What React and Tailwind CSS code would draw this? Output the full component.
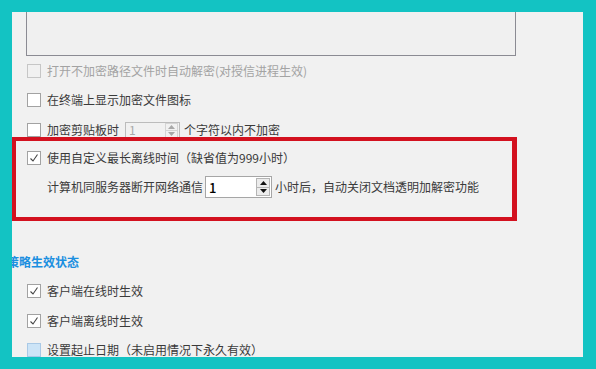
import React from 'react';

const font = { fontFamily: '"Noto Sans CJK SC", "Noto Sans", sans-serif' };

const Check = ({ checked, disabled, tint }) => (
  <span
    className={
      'w-[14px] h-[14px] shrink-0 border flex items-center justify-center ' +
      (disabled
        ? 'border-[#c6c6c6] bg-transparent'
        : tint
        ? 'border-[#a9c9e6] bg-[#cce4f7]'
        : 'border-[#a2a2a2] bg-white')
    }
  >
    {checked && (
      <svg width="12" height="12" viewBox="0 0 12 12">
        <polyline points="2.5,6.5 5,9 9.5,2.5" fill="none" stroke="#444" strokeWidth="1.1" />
      </svg>
    )}
  </span>
);

const Row = ({ className = '', children }) => (
  <div className={'flex items-center h-[22px] pl-[15px] gap-[6px] ' + className}>{children}</div>
);

const Spin = ({ disabled }) => (
  <div
    className={
      'flex items-center justify-between border ' +
      (disabled
        ? 'w-[55px] h-[17px] border-[#bcbcbc] bg-transparent'
        : 'w-[67px] h-[22px] border-[#a6a6a6] bg-white')
    }
  >
    <span className={'pl-[3px] leading-none ' + (disabled ? 'text-[12px] text-[#a8a8a8]' : 'text-[13px] text-black font-medium')}>1</span>
    <div className={'flex flex-col mr-[1px] ' + (disabled ? 'w-[13px] h-[15px]' : 'w-[14px] h-[18px]')}>
      <span className={'flex-1 flex items-center justify-center border ' + (disabled ? 'border-[#d4d4d4]' : 'border-[#b5b5b5] bg-[#ececec]')}>
        <svg width="7" height="4" viewBox="0 0 7 4"><polygon points="0,4 3.5,0 7,4" fill={disabled ? '#a8a8a8' : '#111'} /></svg>
      </span>
      <span className={'flex-1 flex items-center justify-center border border-t-0 ' + (disabled ? 'border-[#d4d4d4]' : 'border-[#b5b5b5] bg-[#ececec]')}>
        <svg width="7" height="4" viewBox="0 0 7 4"><polygon points="0,0 7,0 3.5,4" fill={disabled ? '#a8a8a8' : '#111'} /></svg>
      </span>
    </div>
  </div>
);

export default function App() {
  return (
    <div className="w-[596px] h-[369px] bg-[#13c3c3] pt-[12px] pl-[12px] pr-[13px] pb-[12px]" style={font}>
      <div className="relative w-full h-full bg-[#f1f1f1] overflow-hidden text-[12px] text-[#3a3a3a]">
        <div className="ml-[14px] mt-[-10px] w-[490px] h-[54px] border border-[#8b8b93] bg-[#f0f0f0]" />

        <Row className="mt-[4px] text-[#a3a3a3]">
          <Check disabled />
          <span>打开不加密路径文件时自动解密(对授信进程生效)</span>
        </Row>
        <Row className="mt-[7px]">
          <Check />
          <span>在终端上显示加密文件图标</span>
        </Row>
        <Row className="mt-[8px]">
          <Check />
          <span>加密剪贴板时</span>
          <Spin disabled />
          <span className="-ml-[2px]">个字符以内不加密</span>
        </Row>
        <Row className="mt-[6px]">
          <Check checked />
          <span>使用自定义最长离线时间（缺省值为999小时）</span>
        </Row>
        <div className="flex items-center h-[22px] pl-[35px] mt-[7px] gap-[2px]">
          <span>计算机同服务器断开网络通信</span>
          <Spin />
          <span className="ml-[1px]">小时后，自动关闭文档透明加解密功能</span>
        </div>

        <div className="h-[22px] mt-[53px] flex items-center -ml-[5px] font-bold text-[#1b8fe0]">策略生效状态</div>

        <Row className="mt-[7px]">
          <Check checked />
          <span>客户端在线时生效</span>
        </Row>
        <Row className="mt-[8px]">
          <Check checked />
          <span>客户端离线时生效</span>
        </Row>
        <Row className="mt-[7px]">
          <Check tint />
          <span>设置起止日期（未启用情况下永久有效）</span>
        </Row>

        <div className="absolute left-0 top-[125px] w-[505px] h-[84px] border-4 border-r-[5px] border-[#d3111f] pointer-events-none" />
      </div>
    </div>
  );
}
